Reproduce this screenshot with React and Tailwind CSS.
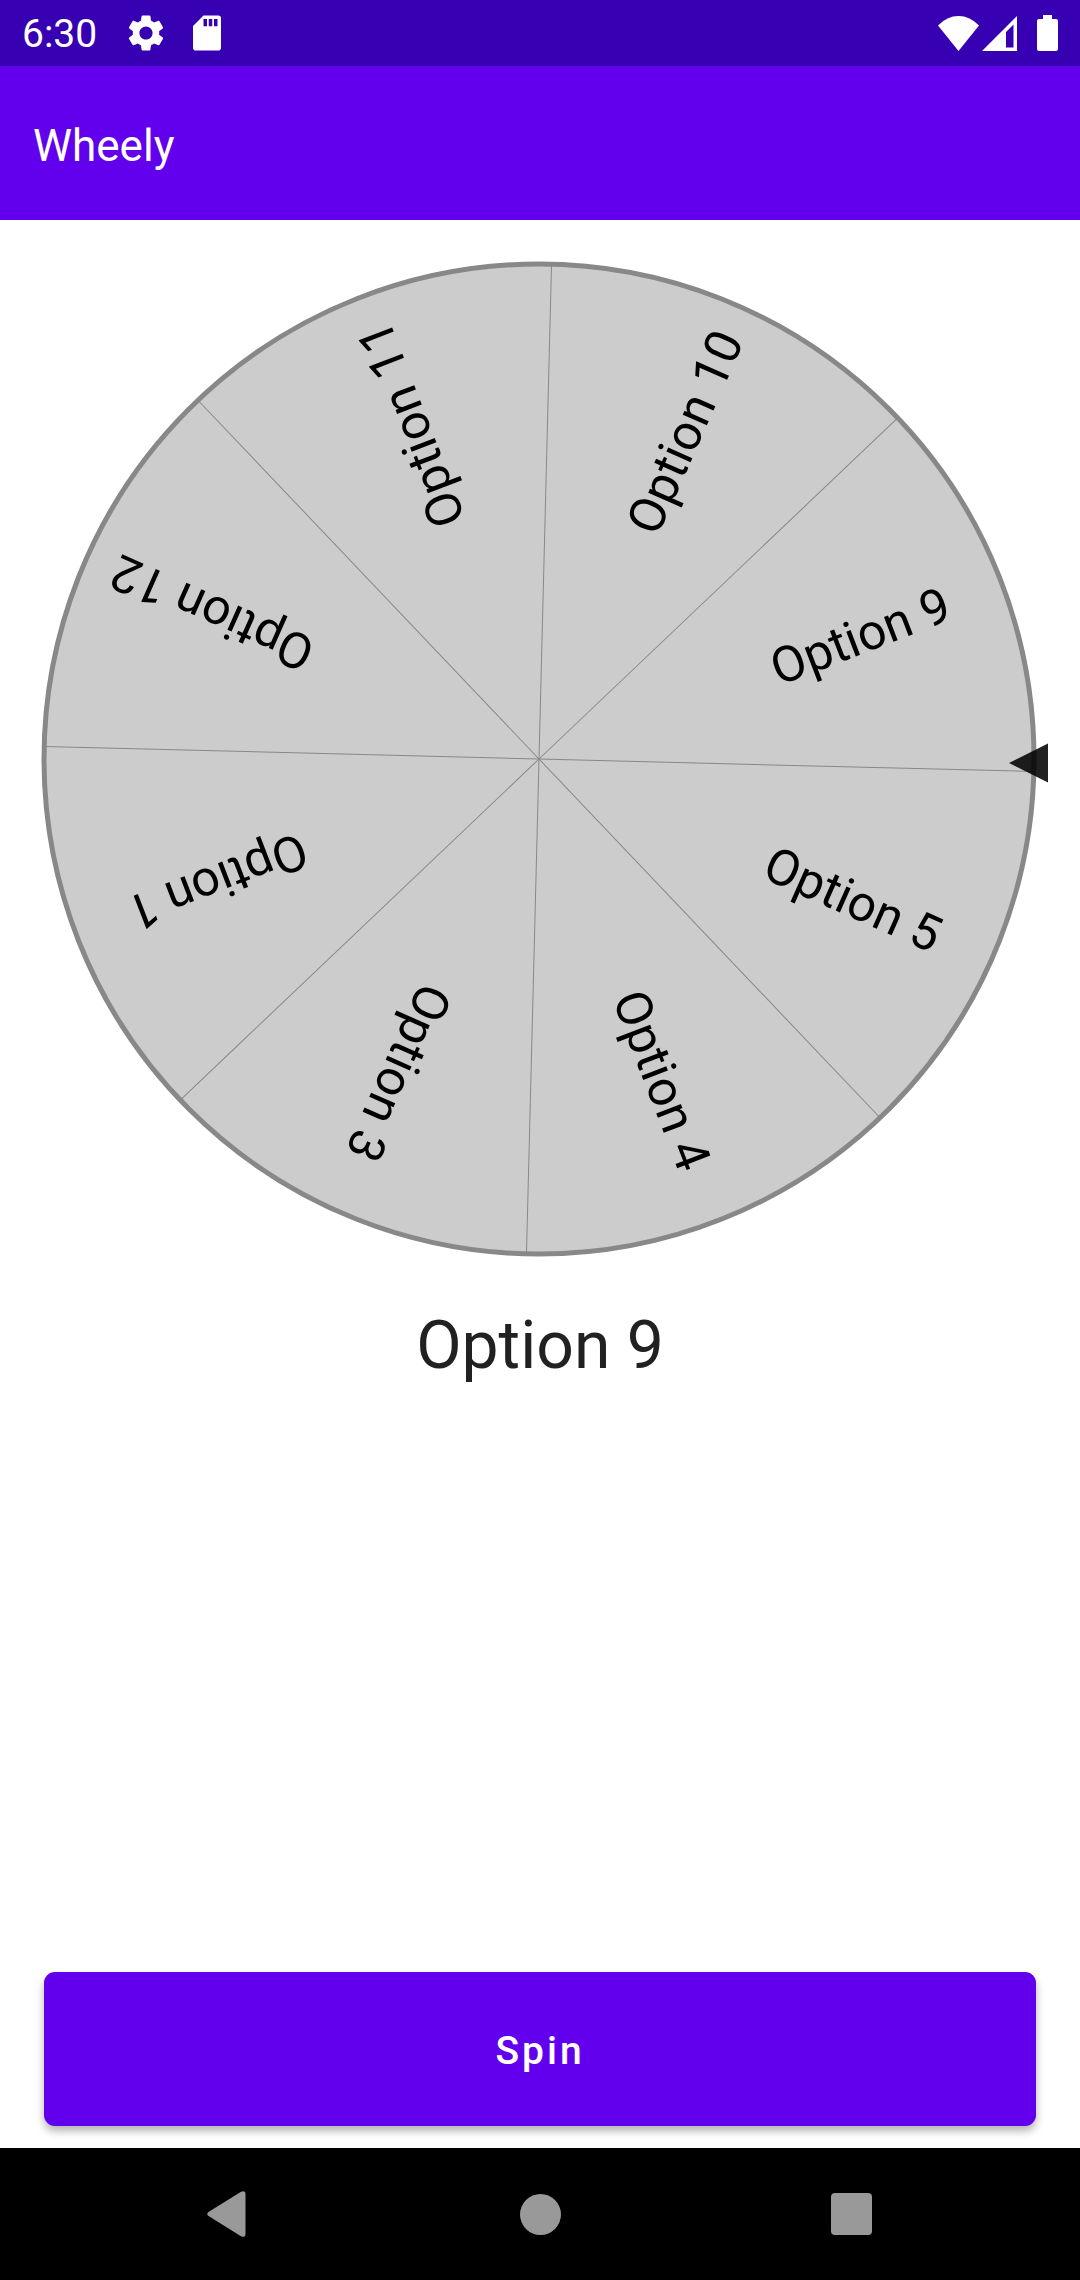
import React from "react";

const OPTIONS = ["Option 5", "Option 4", "Option 3", "Option 1", "Option 12", "Option 11", "Option 10", "Option 9"];
const SLICE = 360 / OPTIONS.length;
const ROTATION = 1.45;

function StatusBar() {
  return (
    <div className="flex h-[66px] items-center justify-between bg-[#3700b3] px-[22px] text-white">
      <div className="flex items-center">
        <span className="pt-[2px] text-[39px] leading-[46px]">6:30</span>
        <svg className="ml-[27px] h-[44px] w-[44px]" viewBox="0 0 24 24" fill="currentColor" aria-label="Settings">
          <path d="M19.14 12.94c.04-.3.06-.61.06-.94 0-.32-.02-.64-.07-.94l2.03-1.58a.49.49 0 0 0 .12-.61l-1.92-3.32a.488.488 0 0 0-.59-.22l-2.39.96c-.5-.38-1.03-.7-1.62-.94l-.36-2.54a.484.484 0 0 0-.48-.41h-3.840c-.24 0-.43.17-.47.41l-.36 2.54c-.59.24-1.13.57-1.62.94l-2.39-.96c-.22-.08-.47 0-.59.22L2.740 8.870c-.12.21-.08.47.12.61l2.030 1.580c-.05.3-.09.63-.09.94s.02.64.07.94l-2.030 1.580a.49.49 0 0 0-.12.61l1.920 3.320c.12.22.37.29.59.22l2.390-.96c.5.38 1.030.7 1.620.94l.36 2.540c.05.24.24.41.48.41h3.840c.24 0 .44-.17.47-.41l.36-2.540c.59-.24 1.130-.56 1.620-.94l2.390.96c.22.08.47 0 .59-.22l1.920-3.320c.12-.22.07-.47-.12-.61l-2.010-1.580zM12 15.600c-1.980 0-3.600-1.620-3.600-3.600s1.620-3.600 3.600-3.600 3.600 1.620 3.600 3.600-1.620 3.600-3.600 3.600z" />
        </svg>
        <svg className="ml-[18px] h-[42px] w-[42px]" viewBox="0 0 24 24" fill="currentColor" aria-label="SD card">
          <path d="M18.500 2H10L4 8V20.500C4 21.300 4.700 22 5.500 22H18.500C19.300 22 20 21.300 20 20.500V3.500C20 2.700 19.300 2 18.500 2ZM12 8.200H10V4H12ZM15 8.200H13V4H15ZM18 8.200H16V4H18Z" />
        </svg>
      </div>
      <div className="flex items-center">
        <svg className="h-[35px] w-[42px]" viewBox="0 0 42 35" fill="currentColor" aria-label="Wi-Fi">
          <path d="M0 9.500Q9 0 20.500 0T41 9.500L20.500 35Z" />
        </svg>
        <svg className="ml-[2px] h-[35px] w-[36px]" viewBox="0 0 36 35" fill="currentColor" aria-label="Mobile signal">
          <path fillRule="evenodd" d="M0 35L35 0V35ZM24 16V31.500H31.500V8.500Z" />
        </svg>
        <svg className="ml-[19px] h-[36px] w-[21px]" viewBox="0 0 21 36" fill="currentColor" aria-label="Battery">
          <path d="M6 0H15V4H19Q21 4 21 6V34Q21 36 19 36H2Q0 36 0 34V6Q0 4 2 4H6Z" />
        </svg>
      </div>
    </div>
  );
}

function Wheel() {
  return (
    <svg className="block w-full" viewBox="0 0 1080 1012" role="img" aria-label="Wheel of options">
      <g transform="translate(539 506)">
        <circle r="495" fill="#cccccc" stroke="#888888" strokeWidth="5" />
        {OPTIONS.map((label, i) => (
          <React.Fragment key={label}>
            <line x2="495" stroke="#888888" transform={`rotate(${ROTATION + i * SLICE})`} />
            <text
              x="250"
              y="18"
              className="text-[50px]"
              transform={`rotate(${ROTATION + SLICE / 2 + i * SLICE})`}
            >
              {label}
            </text>
          </React.Fragment>
        ))}
      </g>
      <path d="M1009 510L1048 490.500V529.500Z" fill="#000000" fillOpacity="0.87" />
    </svg>
  );
}

function NavBar() {
  return (
    <nav className="grid h-[132px] grid-cols-[1fr_180px_1fr] items-center bg-black px-[139px] text-[#999999]">
      <button type="button" aria-label="Back" className="flex h-full w-[180px] items-center justify-center">
        <svg className="h-[46px] w-[45px]" viewBox="0 0 45 46" fill="currentColor">
          <path d="M1.500 21L34 .8Q38.500-1 38.500 3V43Q38.500 47 34 45.200L1.500 25Q-1 23 1.500 21Z" />
        </svg>
      </button>
      <button type="button" aria-label="Home" className="flex h-full items-center justify-center">
        <span className="h-[41px] w-[41px] rounded-full bg-current" />
      </button>
      <button type="button" aria-label="Recents" className="flex h-full w-[180px] items-center justify-center justify-self-end">
        <span className="h-[42px] w-[41px] rounded-[4px] bg-current" />
      </button>
    </nav>
  );
}

export default function App() {
  return (
    <div className="flex min-h-screen flex-col bg-white font-['Roboto',sans-serif]">
      <StatusBar />
      <header className="flex h-[154px] items-center bg-[#6200ee] px-[33px] pt-[6px] text-white">
        <h1 className="text-[44px] leading-[52px]">Wheely</h1>
      </header>
      <main className="flex flex-1 flex-col pt-[33px]">
        <Wheel />
        <p className="mt-[42px] text-center text-[66px] leading-[78px] text-[#212121]">Option 9</p>
        <button
          type="button"
          className="mx-[44px] mt-auto mb-[22px] h-[154px] rounded-[11px] bg-[#6200ee] pt-[4px] text-[39px] font-medium tracking-[3px] text-white shadow-[0_5px_8px_rgba(0,0,0,0.3)]"
        >
          Spin
        </button>
      </main>
      <NavBar />
    </div>
  );
}
